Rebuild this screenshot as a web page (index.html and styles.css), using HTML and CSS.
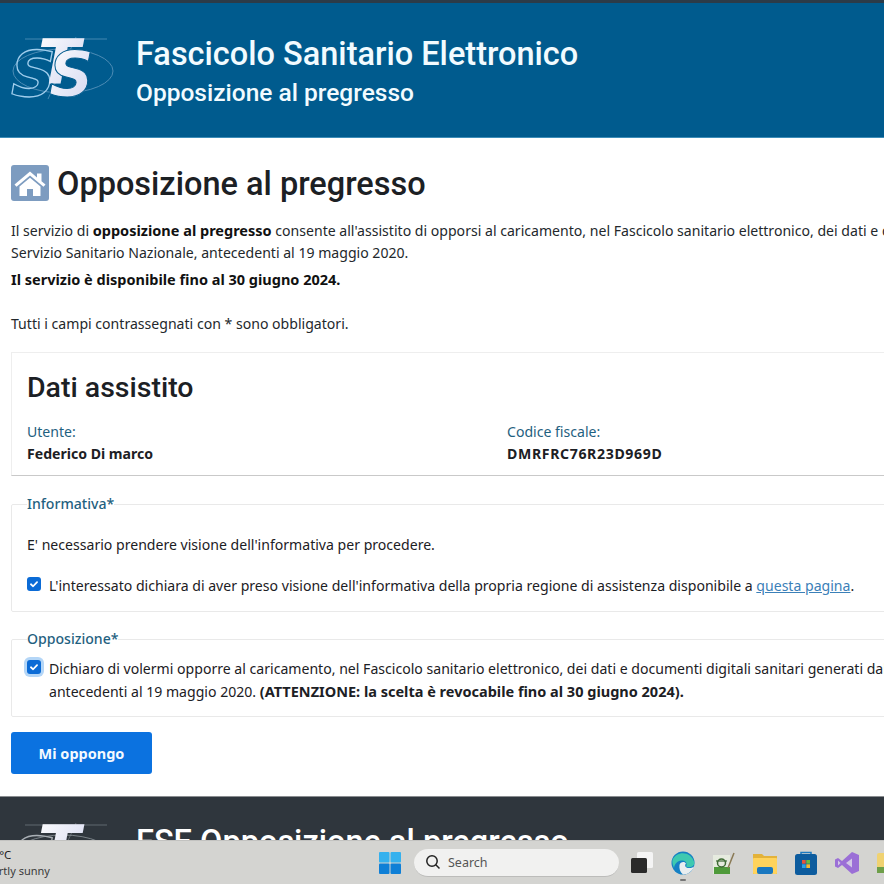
FILE: index.html
```html
<!DOCTYPE html>
<html lang="en">
<head>
<meta charset="UTF-8">
<meta name="viewport" content="width=device-width, initial-scale=1.0">
<title>Opposizione al pregresso</title>
<link rel="stylesheet" href="styles.css">
</head>
<body>
<div class="page">
  <div class="header">
    <svg class="logo" viewBox="0 0 110 70" width="110" height="70">
      <defs>
        <linearGradient id="logoFill" x1="0" y1="0" x2="1" y2="1">
          <stop offset="0" stop-color="#ffffff"/>
          <stop offset="1" stop-color="#cfd3ee"/>
        </linearGradient>
      </defs>
      <ellipse cx="55" cy="37" rx="50" ry="22" fill="none" stroke="#4d8cb5" stroke-width="1"/>
      <path d="M17 5H99M40 65L68 3" stroke="#5f9cc2" stroke-width="0.7" fill="none"/>
      <text x="3" y="62" class="logo-s1">S</text>
      <text x="30" y="50" class="logo-t" fill="url(#logoFill)">T</text>
      <text x="41" y="62" class="logo-s2" fill="url(#logoFill)">S</text>
    </svg>
    <div class="header-text">
      <h1>Fascicolo Sanitario Elettronico</h1>
      <h2>Opposizione al pregresso</h2>
    </div>
  </div>

  <div class="content">
    <div class="page-title">
      <svg class="home-icon" viewBox="0 0 38 36" width="38" height="36">
        <rect width="38" height="36" rx="3" fill="#7d9cc0"/>
        <path d="M3.500 19.500L19 6.500L26 12.400V8.500H30.500V16.200L34.500 19.500L32.500 21.800L19 10.500L5.500 21.800Z" fill="#fff"/>
        <path d="M8.500 21.500L19 12.800L29.500 21.500V31H22V24H16V31H8.500Z" fill="#fff"/>
      </svg>
      <h2>Opposizione al pregresso</h2>
    </div>

    <p class="intro first">Il servizio di <b>opposizione al pregresso</b> consente all'assistito di opporsi al caricamento, nel Fascicolo sanitario elettronico, dei dati e documenti digitali sanitari generati dal<br>Servizio Sanitario Nazionale, antecedenti al 19 maggio 2020.</p>
    <p class="intro"><b>Il servizio è disponibile fino al 30 giugno 2024.</b></p>
    <p class="intro required">Tutti i campi contrassegnati con * sono obbligatori.</p>

    <div class="card">
      <h3>Dati assistito</h3>
      <div class="data-row">
        <div class="data-col">
          <div class="data-label">Utente:</div>
          <div class="data-value">Federico Di marco</div>
        </div>
        <div class="data-col">
          <div class="data-label">Codice fiscale:</div>
          <div class="data-value code">DMRFRC76R23D969D</div>
        </div>
      </div>
    </div>

    <fieldset class="group group-info">
      <legend>Informativa*</legend>
      <p class="group-note">E' necessario prendere visione dell'informativa per procedere.</p>
      <div class="check-row">
        <span class="check"><svg viewBox="0 0 16 16" width="16" height="16"><path d="M4.500 8.300L7 10.600L11.500 5.800" fill="none" stroke="#fff" stroke-width="2" stroke-linecap="round" stroke-linejoin="round"/></svg></span>
        <span>L'interessato dichiara di aver preso visione dell'informativa della propria regione di assistenza disponibile a <a href="#">questa pagina</a>.</span>
      </div>
    </fieldset>

    <fieldset class="group group-opp">
      <legend>Opposizione*</legend>
      <div class="check-row">
        <span class="check focused"><svg viewBox="0 0 16 16" width="16" height="16"><path d="M4.500 8.300L7 10.600L11.500 5.800" fill="none" stroke="#fff" stroke-width="2" stroke-linecap="round" stroke-linejoin="round"/></svg></span>
        <span>Dichiaro di volermi opporre al caricamento, nel Fascicolo sanitario elettronico, dei dati e documenti digitali sanitari generati dal Servizio Sanitario Nazionale,<br>antecedenti al 19 maggio 2020. <b>(ATTENZIONE: la scelta è revocabile fino al 30 giugno 2024).</b></span>
      </div>
    </fieldset>

    <button class="btn-primary">Mi oppongo</button>
  </div>

  <div class="footer">
    <svg class="logo" viewBox="0 0 110 70" width="110" height="70">
      <path d="M17 5H99M40 65L68 3" stroke="#777f87" stroke-width="0.7" fill="none"/>
      <ellipse cx="55" cy="37" rx="50" ry="22" fill="none" stroke="#7a8288" stroke-width="1"/>
      <text x="3" y="62" class="logo-s1 grey">S</text>
      <text x="30" y="50" class="logo-t" fill="url(#logoFill)">T</text>
    </svg>
    <div class="footer-title">FSE Opposizione al pregresso</div>
  </div>

  <div class="taskbar">
    <div class="weather">
      <div class="temp">25°C</div>
      <div class="sky">Partly sunny</div>
    </div>
    <svg class="start" viewBox="0 0 22 22" width="22" height="22">
      <rect x="0" y="0" width="10.500" height="10.500" rx="1" fill="#35b1ee"/>
      <rect x="11.500" y="0" width="10.500" height="10.500" rx="1" fill="#35b1ee"/>
      <rect x="0" y="11.500" width="10.500" height="10.500" rx="1" fill="#0f7fd6"/>
      <rect x="11.500" y="11.500" width="10.500" height="10.500" rx="1" fill="#0f7fd6"/>
    </svg>
    <div class="search">
      <svg viewBox="0 0 16 16" width="16" height="16"><circle cx="7" cy="7" r="5.200" fill="none" stroke="#222" stroke-width="1.500"/><path d="M10.800 10.800L14.500 14.500" stroke="#222" stroke-width="1.500"/></svg>
      <span>Search</span>
    </div>
    <div class="tray">
      <svg viewBox="0 0 22 22" width="22" height="22"><rect x="6" y="0" width="16" height="16" rx="1.500" fill="#f4f4f4"/><rect x="0" y="6" width="16" height="15" rx="1.500" fill="#2a2a2a"/></svg>
      <span class="tray-item">
        <svg viewBox="0 0 24 24" width="24" height="24"><circle cx="12" cy="12" r="11.500" fill="#1580c4"/><path d="M1.500 9C5 0 20 -1 23.500 12C23 16 18 17 15 15.500C17 12 14 9 10.500 9.500C6 10 3.500 13 3 17C2 14.500 1 12 1.500 9Z" fill="#3ec9b0"/><path d="M8.500 14C9 10.500 14 10 15 12.500C13.500 14 14 16.500 17 17C19 17.300 21 17 23 15.500C21.500 20 17 23.500 12 23.500C9 21 8 17.500 8.500 14Z" fill="#e9eef0"/></svg>
        <i class="running"></i>
      </span>
      <svg viewBox="0 0 22 22" width="22" height="22"><rect x="0" y="3" width="17" height="19" fill="#e6ebdf"/><rect x="1" y="15" width="16" height="7" fill="#4f9a3a"/><circle cx="8.500" cy="11" r="4" fill="none" stroke="#3f6b34" stroke-width="1.500"/><path d="M3 9H14" stroke="#3f6b34" stroke-width="1.200"/><path d="M15 16L21 1" stroke="#8a7a55" stroke-width="1.500"/></svg>
      <svg viewBox="0 0 24 22" width="24" height="22"><path d="M0 2H9L11 4H24V22H0Z" fill="#e3b23a"/><rect y="6" width="24" height="16" rx="1" fill="#ffd35c"/><rect x="4" y="15" width="16" height="7" rx="2" fill="#1a78c0"/></svg>
      <svg viewBox="0 0 22 24" width="22" height="24"><rect y="3" width="22" height="21" rx="2.500" fill="#0d5c9e"/><path d="M6 3V1.500H16V3" fill="none" stroke="#1a78c0" stroke-width="1.500"/><rect x="7" y="9" width="3.700" height="3.700" fill="#e8533a"/><rect x="11.300" y="9" width="3.700" height="3.700" fill="#6cbb3c"/><rect x="7" y="13.300" width="3.700" height="3.700" fill="#2aa0e6"/><rect x="11.300" y="13.300" width="3.700" height="3.700" fill="#f5b82e"/></svg>
      <svg viewBox="0 0 24 24" width="24" height="24"><path d="M17 1L24 4V20L17 23L7 14L3 17L0 15.500V8.500L3 7L7 10Z" fill="#9b6fd6"/><path d="M17 7.500V16.500L11 12Z" fill="#d3c9e6"/><path d="M3 9.500V14.500L5.500 12Z" fill="#d3c9e6"/></svg>
      <svg viewBox="0 0 22 24" width="22" height="24"><rect y="2" width="22" height="20" rx="2" fill="#f0d271"/><rect y="16" width="22" height="6" fill="#6e9f49"/></svg>
    </div>
  </div>
</div>
</body>
</html>
```
FILE: styles.css
```css
html, body {
  margin: 0;
  padding: 0;
  overflow: hidden;
  background: #fff;
}
.page {
  position: relative;
  width: 884px;
  height: 884px;
  overflow: hidden;
  font-family: "Noto Sans", "Open Sans", sans-serif;
  font-size: 14.080px;
  color: #1c2024;
}
.header {
  display: flex;
  align-items: center;
  gap: 18px;
  box-sizing: border-box;
  height: 138px;
  padding: 0 0 2px 8px;
  background: #005b8e;
  border-top: 3px solid #2c3b48;
  border-bottom: 1px solid #3d8db8;
  color: #f2fbff;
}
.header-text {
  padding-top: 4px;
}
.header h1 {
  margin: 0;
  font-family: Roboto, sans-serif;
  font-size: 32.500px;
  font-weight: 500;
  line-height: 42px;
  white-space: nowrap;
}
.header h2 {
  margin: 0;
  padding-top: 1px;
  font-family: Roboto, sans-serif;
  font-size: 24.500px;
  font-weight: 500;
  line-height: 34px;
  white-space: nowrap;
}
.logo {
  flex: none;
}
.logo text {
  font-family: "DejaVu Sans", sans-serif;
  font-style: italic;
  font-weight: bold;
}
.logo-s1 {
  font-size: 62px;
  fill: none;
  stroke: #9fcdec;
  stroke-width: 1.300px;
}
.logo-s1.grey {
  stroke: #a9afb5;
}
.logo-t {
  font-size: 62px;
}
.logo-s2 {
  font-size: 62px;
  stroke: #005b8e;
  stroke-width: 1px;
}
.content {
  width: 1240px;
  padding: 0 0 0 11px;
}
.page-title {
  display: flex;
  align-items: center;
  gap: 8px;
  height: 38px;
  margin-top: 26px;
}
.page-title h2 {
  margin: 0;
  padding-top: 2px;
  font-family: Roboto, sans-serif;
  font-size: 32.500px;
  font-weight: 500;
  line-height: 38px;
  white-space: nowrap;
}
.intro {
  margin: 0;
  line-height: 22px;
  white-space: nowrap;
  color: #23282c;
}
.intro.first {
  margin-top: 17px;
  margin-bottom: 4px;
}
.intro b {
  color: #111;
}
b {
  font-size: 14.500px;
}
.intro.required {
  margin-top: 22px;
}
.card {
  box-sizing: border-box;
  height: 124px;
  margin-top: 17px;
  padding: 17px 15px 0;
  border: 1px solid #eee;
  border-bottom: 1px solid #c9c9c9;
}
.card h3 {
  margin: 0 0 15px;
  font-family: Roboto, sans-serif;
  font-size: 28.500px;
  font-weight: 500;
  line-height: 36px;
}
.data-row {
  display: flex;
}
.data-col {
  width: 480px;
}
.data-label {
  line-height: 22px;
  color: #1f6180;
}
.data-value {
  font-weight: bold;
  line-height: 22px;
  color: #1c2024;
}
.data-value.code {
  letter-spacing: 0.650px;
}
.group {
  box-sizing: border-box;
  margin: 0;
  padding: 0 15px;
  border: 1px solid #e9e9e9;
  border-radius: 2px;
}
.group legend {
  padding: 0;
  font-weight: 500;
  line-height: 20px;
  color: #1f6180;
}
.group-info {
  height: 118px;
  margin-top: 18px;
}
.group-opp {
  height: 88px;
  margin-top: 17px;
}
.group-note {
  margin: 20px 0 18px;
  line-height: 22px;
}
.group-opp .check-row {
  margin-top: 8px;
}
.check-row {
  display: flex;
  gap: 8px;
  line-height: 23px;
  white-space: nowrap;
}
.check {
  flex: none;
  box-sizing: border-box;
  width: 14px;
  height: 14px;
  margin-top: 3px;
  border-radius: 3px;
  background: #0b6bd6;
}
.check svg {
  display: block;
  width: 14px;
  height: 14px;
}
.check.focused {
  box-shadow: 0 0 0 3px #b4d6f7;
}
.check-row a {
  color: #3b80b8;
}
.btn-primary {
  display: block;
  width: 141px;
  height: 42px;
  margin-top: 15px;
  border: 0;
  border-radius: 3px;
  background: #0b72e0;
  color: #f4f9ff;
  font-family: "Noto Sans", sans-serif;
  font-size: 14.500px;
  font-weight: bold;
}
.footer {
  display: flex;
  gap: 18px;
  height: 90px;
  margin-top: 22px;
  padding: 23px 0 0 8px;
  background: #2f363d;
  border-top: 1px solid #8a8d90;
}
.footer-title {
  margin-top: 3px;
  font-family: Roboto, sans-serif;
  font-size: 32.500px;
  font-weight: 500;
  line-height: 38px;
  color: #fff;
  white-space: nowrap;
}
.taskbar {
  position: absolute;
  left: 0;
  right: 0;
  bottom: 0;
  display: flex;
  align-items: center;
  height: 44px;
  background: #d4d4d1;
  border-top: 1px solid #c2c2c0;
  box-sizing: border-box;
}
.weather {
  flex: none;
  width: 379px;
  margin-left: -14px;
  margin-right: 14px;
  font-size: 11px;
  line-height: 16px;
  color: #3a3a3a;
}
.weather .temp {
  color: #1d1d1d;
  font-size: 11.500px;
}
.start {
  flex: none;
  margin-right: 13px;
}
.search {
  flex: none;
  display: flex;
  align-items: center;
  gap: 7px;
  box-sizing: border-box;
  width: 205px;
  height: 28px;
  padding-left: 11px;
  border-radius: 14px;
  background: #f1f1f0;
  border-bottom: 1px solid #bcbcba;
  font-size: 12.500px;
  color: #555;
}
.search svg {
  flex: none;
}
.tray {
  flex: none;
  display: flex;
  align-items: center;
  gap: 18px;
  margin-left: 12px;
}
.tray svg {
  flex: none;
  display: block;
}
.tray-item {
  position: relative;
  display: block;
}
.running {
  position: absolute;
  left: 9px;
  bottom: -6px;
  width: 6px;
  height: 2px;
  border-radius: 1px;
  background: #777;
}
```
